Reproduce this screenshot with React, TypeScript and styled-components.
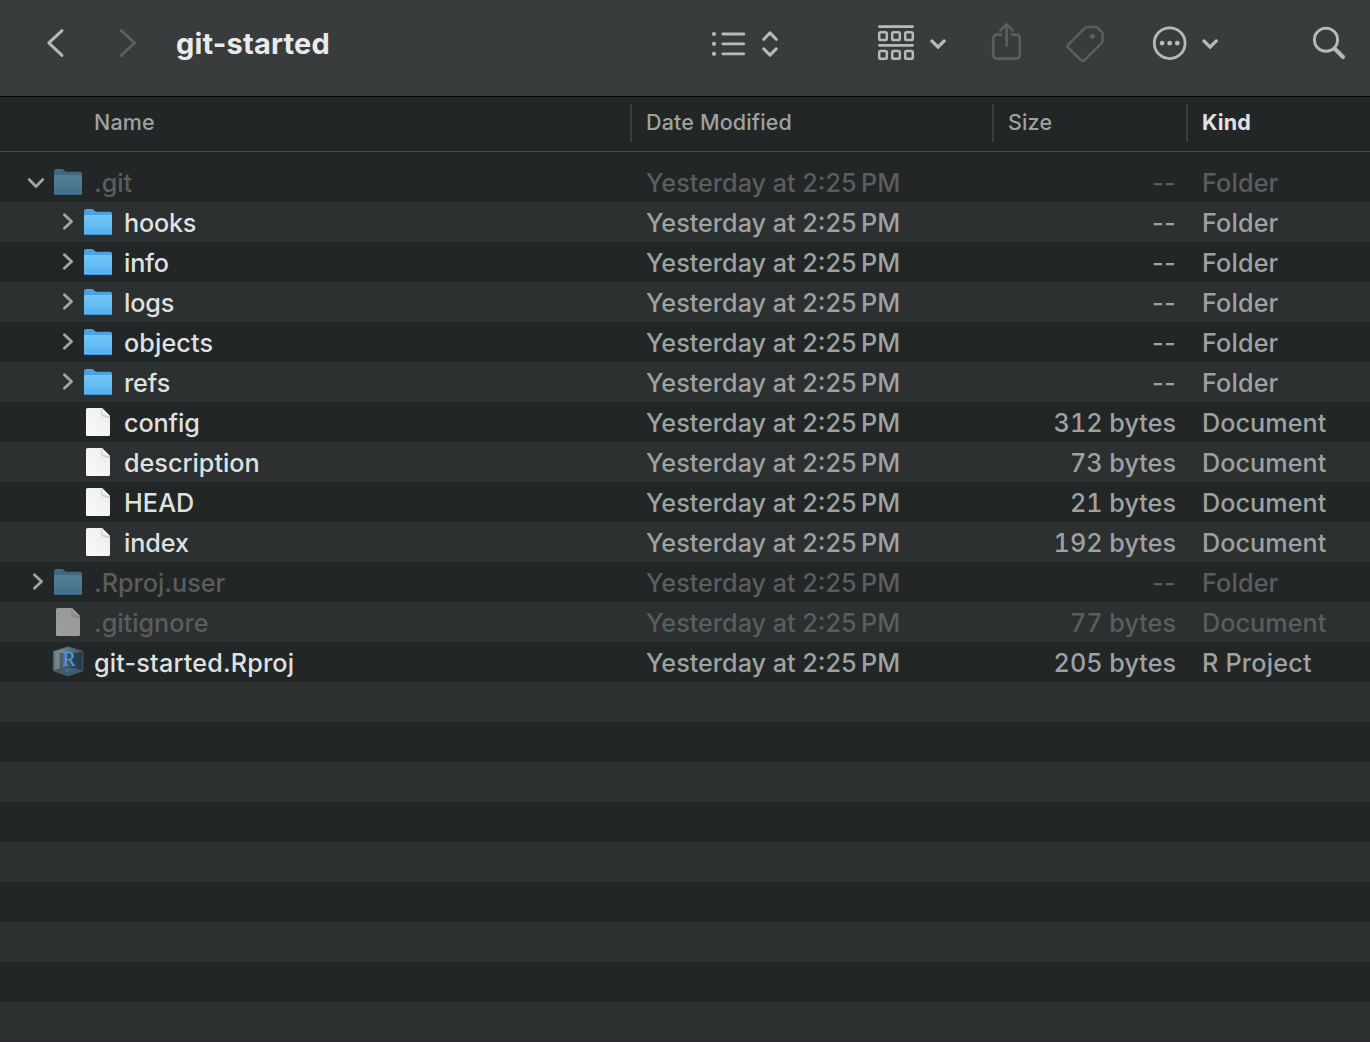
import React from "react";
import styled, { createGlobalStyle, css } from "styled-components";

const GlobalStyle = createGlobalStyle`
  * { box-sizing: border-box; }
  body { margin: 0; background: #222627; font-family: Inter, "Liberation Sans", sans-serif; }
`;

const COLUMNS = "630px 362px 194px 1fr";

const Window = styled.div`
  width: 1370px;
  height: 1042px;
  overflow: hidden;
  background: #222627;
  display: flex;
  flex-direction: column;
  border-bottom: 1px solid #30262e;
`;

const Toolbar = styled.header`
  height: 97px;
  flex: none;
  display: flex;
  align-items: flex-start;
  padding: 20px 22px 0 42px;
  background: #383c3d;
  border-bottom: 1px solid #000;
`;

const ToolButton = styled.button<{ $w: number; $gap?: number; $dim?: boolean }>`
  width: ${(p) => p.$w}px;
  height: 46px;
  margin: 0 0 0 ${(p) => p.$gap ?? 0}px;
  padding: 0;
  border: 0;
  background: none;
  color: ${(p) => (p.$dim ? "#5b5f60" : "#b6babb")};
  flex: none;

  svg { display: block; }
`;

const Title = styled.h1`
  width: 520px;
  margin: 0 0 0 34px;
  font-size: 29px;
  line-height: 47px;
  font-weight: 700;
  letter-spacing: 0.18px;
  color: #e9eaea;
  white-space: nowrap;
`;

const HeaderRow = styled.div`
  height: 55px;
  flex: none;
  display: grid;
  grid-template-columns: ${COLUMNS};
  padding: 7px 0 9px;
  border-bottom: 1px solid #484c4d;
`;

const HeaderCell = styled.div<{ $first?: boolean; $sorted?: boolean }>`
  height: 38px;
  line-height: 37px;
  font-size: 21.5px;
  letter-spacing: 0.15px;
  white-space: nowrap;
  font-weight: ${(p) => (p.$sorted ? 700 : 450)};
  color: ${(p) => (p.$sorted ? "#e0e1e1" : "#9fa1a1")};
  ${(p) =>
    p.$first
      ? css`padding-left: 94px;`
      : css`
          padding-left: 14px;
          border-left: 2px solid #3b3f40;
        `}
`;

const List = styled.div`
  flex: 1;
  padding-top: 10px;
  overflow: hidden;
`;

const Row = styled.div<{ $dim?: boolean }>`
  height: 40px;
  display: grid;
  grid-template-columns: ${COLUMNS};
  font-size: 25.2px;
  font-weight: 450;
  line-height: 42px;
  color: ${(p) => (p.$dim ? "#5a5d5e" : "#9fa1a1")};
  white-space: nowrap;

  &:nth-child(even) { background: #2c3031; }
`;

const NameCell = styled.div<{ $depth: number }>`
  display: flex;
  padding-left: ${(p) => 22 + p.$depth * 30}px;
`;

const Disclosure = styled.span`
  width: 32px;
  height: 40px;
  color: #a3a5a5;
  svg { display: block; }
`;

const IconBox = styled.span<{ $dim?: boolean }>`
  width: 40px;
  height: 40px;
  ${(p) => p.$dim && css`opacity: 0.55; filter: saturate(0.85);`}
  svg { display: block; }
`;

const FileName = styled.span<{ $dim?: boolean; $track?: number }>`
  color: ${(p) => (p.$dim ? "#5a5d5e" : "#dfe0e0")};
  letter-spacing: ${(p) => p.$track ?? 0}px;
`;

const Cell = styled.div<{ $track?: number }>`
  padding-left: 16px;
  letter-spacing: ${(p) => p.$track ?? 0}px;
`;

const SizeCell = styled.div<{ $empty?: boolean }>`
  padding-right: 10px;
  text-align: right;
  font-variant-numeric: ${(p) => (p.$empty ? "normal" : "tabular-nums")};
  letter-spacing: ${(p) => (p.$empty ? 0.4 : 0)}px;
`;

const stroke = {
  fill: "none",
  stroke: "currentColor",
  strokeLinecap: "round" as const,
  strokeLinejoin: "round" as const,
};

const FolderIcon = () => (
  <svg width="40" height="40">
    <defs>
      <linearGradient id="folderBody" x1="0" y1="0" x2="0" y2="1">
        <stop offset="0" stopColor="#72c6f9" />
        <stop offset="1" stopColor="#58b4f1" />
      </linearGradient>
    </defs>
    <path d="M0 9.2Q0 7 2 7H7.6Q8.8 7 9.7 7.8L11.2 9.2Q12 9.8 13 9.8H26.2Q28 9.8 28 11.6V30H0Z" fill="#4aa1e1" />
    <path d="M0 14.2Q0 12.9 1.3 12.9H26.7Q28 12.9 28 14.2V31.6Q28 33 26.6 33H1.4Q0 33 0 31.6Z" fill="url(#folderBody)" />
    <path d="M0 27.6H28M0 29.8H28" stroke="#4ba5e5" strokeWidth="0.8" />
    <path d="M0.6 32.5H27.4" stroke="#3f97d8" strokeWidth="1" />
  </svg>
);

const DocumentIcon = () => (
  <svg width="40" height="40">
    <defs>
      <linearGradient id="page" x1="1" y1="0" x2="0" y2="1">
        <stop offset="0" stopColor="#ececec" />
        <stop offset="1" stopColor="#fafafa" />
      </linearGradient>
      <linearGradient id="fold" x1="1" y1="0" x2="0" y2="1">
        <stop offset="0.5" stopColor="#ffffff" />
        <stop offset="1" stopColor="#d8d8d8" />
      </linearGradient>
    </defs>
    <path d="M2 7.5Q2 6 3.5 6H18L26 14V32.5Q26 34 24.5 34H3.5Q2 34 2 32.5Z" fill="url(#page)" />
    <path d="M18 14H26L26 17Z" fill="#d9d9d9" />
    <path d="M18 6L26 14H19Q18 14 18 13Z" fill="url(#fold)" stroke="#b4b4b4" strokeWidth="0.6" />
  </svg>
);

const RLetter = styled.text`
  font-family: "Liberation Serif", serif;
  font-size: 20px;
  fill: #4b9df0;
`;

const RProjectIcon = () => (
  <svg width="40" height="40" overflow="visible">
    <defs>
      <linearGradient id="cubeLeft" x1="0" y1="0" x2="1" y2="0">
        <stop offset="0" stopColor="#5f757c" />
        <stop offset="0.6" stopColor="#7b8b90" />
        <stop offset="1" stopColor="#3c4d56" />
      </linearGradient>
      <linearGradient id="cubeTop" x1="0" y1="0" x2="1" y2="0">
        <stop offset="0" stopColor="#8a989b" />
        <stop offset="1" stopColor="#38535f" />
      </linearGradient>
      <linearGradient id="cubeInner" x1="0" y1="0" x2="1" y2="0">
        <stop offset="0" stopColor="#5b6c74" />
        <stop offset="0.6" stopColor="#2a3f4f" />
        <stop offset="1" stopColor="#263a4b" />
      </linearGradient>
    </defs>
    <path d="M14.3 4.8L28.8 9.4V28.8L14.3 33.8L-0.6 28.8V9.4Z" fill="#29404f" />
    <path d="M-0.6 9.4L7.6 11.2V26L-0.6 28.8Z" fill="url(#cubeLeft)" />
    <path d="M7.6 11.2H21L28.8 9.4V28.8L21 26H7.6Z" fill="url(#cubeInner)" />
    <path d="M14.3 4.8L28.8 9.4L21 11.2H7.6L-0.6 9.4Z" fill="url(#cubeTop)" />
    <path d="M-0.6 28.8L7.6 26H21L28.8 28.8L14.3 33.8Z" fill="#3f5a68" />
    <path d="M10 27.5L14 26.5L19 29.3L15 29L13 31Z" fill="#2f72a8" />
    <path d="M14.3 4.8L28.8 9.4V28.8L14.3 33.8L-0.6 28.8V9.4Z" fill="none" stroke="#4d6771" strokeWidth="0.8" />
    <RLetter x="8.4" y="24.2">R</RLetter>
  </svg>
);

type Entry = {
  name: string;
  depth: number;
  kind: "folder" | "doc" | "rproj";
  state?: "open" | "closed";
  size: string;
  dim?: boolean;
  track?: number;
};

const ENTRIES: Entry[] = [
  { name: ".git", depth: 0, kind: "folder", state: "open", size: "--", dim: true },
  { name: "hooks", depth: 1, kind: "folder", state: "closed", size: "--", track: -0.2 },
  { name: "info", depth: 1, kind: "folder", state: "closed", size: "--", track: -0.2 },
  { name: "logs", depth: 1, kind: "folder", state: "closed", size: "--", track: -0.1 },
  { name: "objects", depth: 1, kind: "folder", state: "closed", size: "--", track: 0.1 },
  { name: "refs", depth: 1, kind: "folder", state: "closed", size: "--", track: -0.15 },
  { name: "config", depth: 1, kind: "doc", size: "312 bytes", track: -0.15 },
  { name: "description", depth: 1, kind: "doc", size: "73 bytes" },
  { name: "HEAD", depth: 1, kind: "doc", size: "21 bytes", track: 0.1 },
  { name: "index", depth: 1, kind: "doc", size: "192 bytes", track: -0.1 },
  { name: ".Rproj.user", depth: 0, kind: "folder", state: "closed", size: "--", dim: true },
  { name: ".gitignore", depth: 0, kind: "doc", size: "77 bytes", dim: true },
  { name: "git-started.Rproj", depth: 0, kind: "rproj", size: "205 bytes", track: 0.16 },
];

const EMPTY_ROWS = 9;

const KIND = { folder: "Folder", doc: "Document", rproj: "R Project" };
const KIND_TRACK = { folder: 0.15, doc: 0.05, rproj: 0.2 };
const ICON = { folder: FolderIcon, doc: DocumentIcon, rproj: RProjectIcon };

const Arrow = ({ state }: { state: "open" | "closed" }) => (
  <svg width="32" height="40" {...stroke} strokeWidth="2.8">
    <path d={state === "open" ? "M7.2 17.4L14 24.4L20.8 17.4" : "M12.4 12.7L19.6 19.5L12.4 26.3"} />
  </svg>
);

export default function App() {
  return (
    <>
      <GlobalStyle />
      <Window>
        <Toolbar>
          <ToolButton $w={26} aria-label="Back">
            <svg width="26" height="46" {...stroke} strokeWidth="2.9"><path d="M20 10.6L6.8 22.9L20 35.4" /></svg>
          </ToolButton>
          <ToolButton $w={26} $gap={48} $dim aria-label="Forward">
            <svg width="26" height="46" {...stroke} strokeWidth="2.9"><path d="M5.2 10.6L18.6 22.9L5.2 35.4" /></svg>
          </ToolButton>
          <Title>git-started</Title>
          <ToolButton $w={74} $gap={12} aria-label="List view">
            <svg width="74" height="46" {...stroke} strokeWidth="3">
              <path d="M14.8 14H35.8M14.8 23.8H35.8M14.8 33.8H35.8" strokeWidth="2.8" />
              <path d="M6 14h.01M6 23.8h.01M6 33.8h.01" strokeWidth="4.2" />
              <path d="M55.8 19.3L62 12.9L68.2 19.3M55.8 28.9L62 35.1L68.2 28.9" />
            </svg>
          </ToolButton>
          <ToolButton $w={76} $gap={92} aria-label="Group by">
            <svg width="76" height="46" {...stroke} strokeWidth="2.5">
              <path d="M5.4 6.6H38.6M5.4 25.3H38.6" strokeWidth="2.8" />
              {[12.2, 30.9].map((y) =>
                [5.2, 18.2, 31.2].map((x) => (
                  <rect key={`${x}-${y}`} x={x} y={y} width="7.6" height="7.9" rx="1.6" />
                ))
              )}
              <path d="M57.8 20.9L64 27.2L70.2 20.9" strokeWidth="3.3" />
            </svg>
          </ToolButton>
          <ToolButton $w={38} $gap={38} $dim aria-label="Share">
            <svg width="38" height="46" {...stroke} strokeWidth="2.6">
              <path d="M13.2 14.6H9.2Q5.2 14.6 5.2 18.6V34.6Q5.2 38.6 9.2 38.6H27.8Q31.8 38.6 31.8 34.6V18.6Q31.8 14.6 27.8 14.6H24" />
              <path d="M18.6 25.6V4.6M12.4 10.4L18.6 4.4L24.8 10.4" />
            </svg>
          </ToolButton>
          <ToolButton $w={44} $gap={36} $dim aria-label="Tags">
            <svg width="44" height="46" {...stroke} strokeWidth="2.5">
              <path d="M26 7H33.4Q35 7 36.2 8.2L39.6 11.6Q40.6 12.6 40.6 14.2V20.6Q40.6 22.2 39.4 23.4L22.8 39.9Q20.7 41.8 18.6 39.9L6.4 27.9Q5 26.2 6.4 24.6L22.8 8.2Q24.2 7 26 7Z" />
              <circle cx="30.4" cy="16.3" r="2.6" fill="currentColor" stroke="none" />
            </svg>
          </ToolButton>
          <ToolButton $w={76} $gap={42} aria-label="More actions">
            <svg width="76" height="46" {...stroke} strokeWidth="2.8">
              <circle cx="21.7" cy="23.2" r="15.4" />
              <path d="M14.1 23.2h.01M21.7 23.2h.01M29.3 23.2h.01" strokeWidth="4.8" />
              <path d="M55.9 20.9L62.1 27.2L68.3 20.9" strokeWidth="3.3" />
            </svg>
          </ToolButton>
          <ToolButton $w={40} $gap={84} aria-label="Search">
            <svg width="40" height="46" {...stroke} strokeWidth="2.9">
              <circle cx="18" cy="19.7" r="11.6" />
              <path d="M27 29L35 37" strokeWidth="4" />
            </svg>
          </ToolButton>
        </Toolbar>
        <HeaderRow>
          <HeaderCell $first>Name</HeaderCell>
          <HeaderCell>Date Modified</HeaderCell>
          <HeaderCell>Size</HeaderCell>
          <HeaderCell $sorted>Kind</HeaderCell>
        </HeaderRow>
        <List>
          {ENTRIES.map((e) => {
            const Icon = ICON[e.kind];
            return (
              <Row key={e.name} $dim={e.dim}>
                <NameCell $depth={e.depth}>
                  <Disclosure>{e.state && <Arrow state={e.state} />}</Disclosure>
                  <IconBox $dim={e.dim}><Icon /></IconBox>
                  <FileName $dim={e.dim} $track={e.track}>{e.name}</FileName>
                </NameCell>
                <Cell>{"Yesterday at 2:25\u202fPM"}</Cell>
                <SizeCell $empty={e.size === "--"}>{e.size}</SizeCell>
                <Cell $track={KIND_TRACK[e.kind]}>{KIND[e.kind]}</Cell>
              </Row>
            );
          })}
          {Array.from({ length: EMPTY_ROWS }, (_, i) => <Row key={i} />)}
        </List>
      </Window>
    </>
  );
}
